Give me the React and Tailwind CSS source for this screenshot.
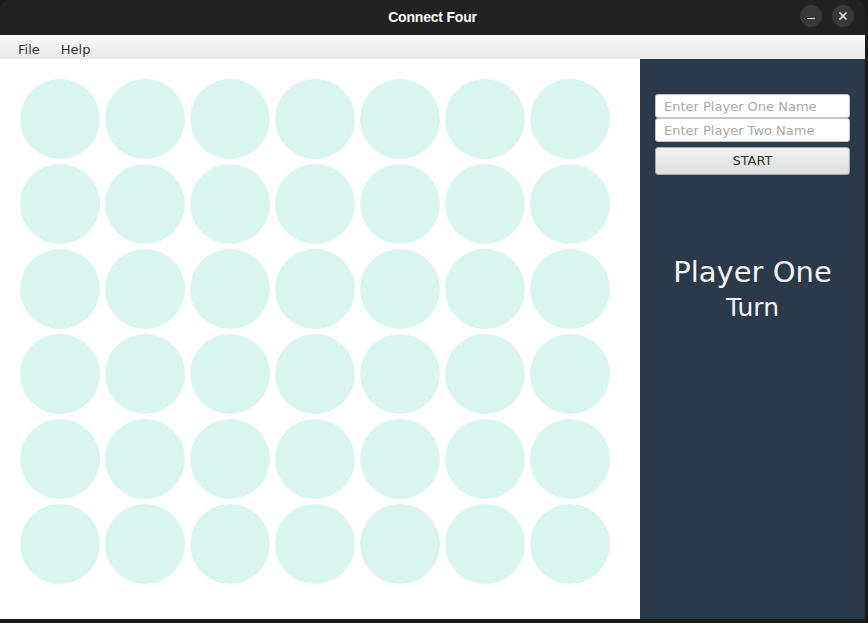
import React from "react";

const ROWS = 6;
const COLS = 7;

export default function App() {
  const cells = Array.from({ length: ROWS * COLS });

  return (
    <div className="w-[868px] h-[623px] bg-[#1b1b1b] overflow-hidden" style={{ fontFamily: "'DejaVu Sans', sans-serif" }}>
      <div className="w-[865px] h-[619px] flex flex-col rounded-t-[10px] overflow-hidden">
        {/* title bar */}
        <div className="h-[35px] bg-[#222222] relative flex items-center justify-center">
          <span className="text-white font-bold text-[14px] tracking-[-0.2px]" style={{ fontFamily: "'Liberation Sans', sans-serif" }}>
            Connect Four
          </span>
          <div className="absolute right-[11px] top-[5px] flex gap-[10px]">
            <div className="w-[22px] h-[22px] rounded-full bg-[#383838] flex items-center justify-center">
              <div className="w-[8px] h-[1.5px] bg-white mt-[5px]" />
            </div>
            <div className="w-[22px] h-[22px] rounded-full bg-[#383838] flex items-center justify-center">
              <svg width="10" height="10" viewBox="0 0 10 10">
                <path d="M1.5 1.5 L8.5 8.5 M8.5 1.5 L1.5 8.5" stroke="white" strokeWidth="1.6" />
              </svg>
            </div>
          </div>
        </div>

        {/* menu bar */}
        <div className="h-[24px] bg-gradient-to-b from-[#fafafa] to-[#e8e8e8] flex items-center gap-[21px] pl-[18px] pt-[5px] text-[13px] text-[#333]">
          <span>File</span>
          <span>Help</span>
        </div>

        <div className="flex flex-1">
          {/* board */}
          <div className="w-[640px] bg-white pt-[20px] pl-[20px]">
            <div className="grid grid-cols-[repeat(7,80px)] gap-[5px]">
              {cells.map((_, i) => (
                <div key={i} className="w-[80px] h-[80px] rounded-full bg-[#d9f5ef]" />
              ))}
            </div>
          </div>

          {/* side panel */}
          <div className="flex-1 bg-[#2b3a4b] flex flex-col items-center pt-[35px]">
            <div className="w-[195px] flex flex-col">
              <input
                placeholder="Enter Player One Name"
                className="h-[24px] bg-white rounded-[3px] border border-[#c4c4c4] px-[8px] text-[13px] text-[#333] placeholder:text-[#a9a9a9] outline-none"
              />
              <input
                placeholder="Enter Player Two Name"
                className="h-[24px] bg-white rounded-[3px] border border-[#c4c4c4] px-[8px] text-[13px] text-[#333] placeholder:text-[#a9a9a9] outline-none"
              />
              <button className="h-[28px] mt-[5px] rounded-[3px] border border-[#a8a8a8] bg-gradient-to-b from-[#f3f3f3] to-[#dcdcdc] text-[13px] text-[#333]">
                START
              </button>
            </div>
            <div className="mt-[83px] flex flex-col items-center text-[#f4f4f4] leading-none">
              <span className="text-[29px]">Player One</span>
              <span className="text-[25px] mt-[8px]">Turn</span>
            </div>
          </div>
        </div>
      </div>
    </div>
  );
}
